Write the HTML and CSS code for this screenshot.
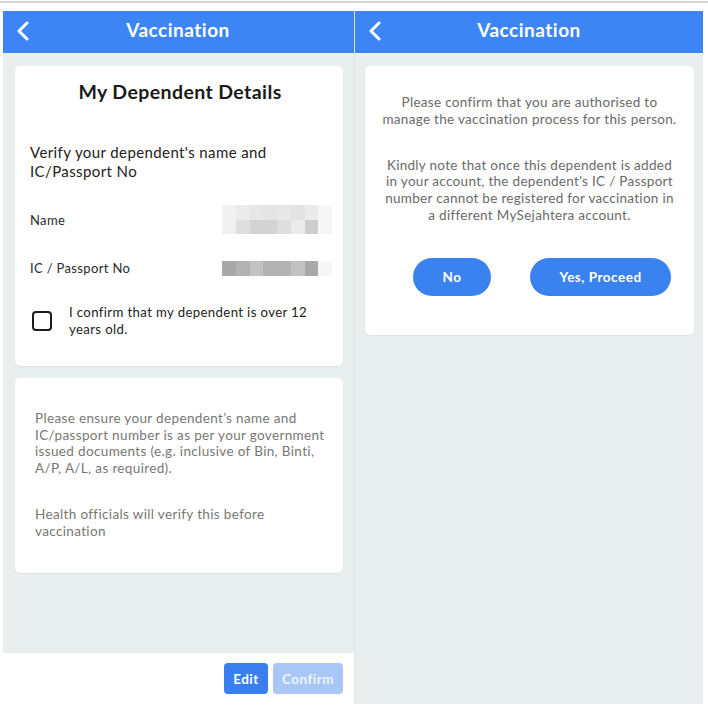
FILE: index.html
```html
<!DOCTYPE html>
<html lang="en">
<head>
<meta charset="utf-8">
<title>Vaccination</title>
<link rel="stylesheet" href="styles.css">
</head>
<body>
<div class="topline"></div>
<div class="screens">
  <section class="phone phone-left">
    <header class="appbar">
      <svg class="back" viewBox="0 0 14 20" width="14" height="20"><path d="M11 2 L3 10 L11 18" fill="none" stroke="#fff" stroke-width="3" stroke-linecap="round" stroke-linejoin="round"/></svg>
      <h1 class="appbar-title">Vaccination</h1>
    </header>
    <main class="content">
      <div class="card details">
        <h2 class="card-title">My Dependent Details</h2>
        <p class="verify">Verify your dependent's name and IC/Passport No</p>
        <div class="field">
          <span class="field-label">Name</span>
          <div class="redact redact-name">
            <i class="c1"></i><i class="c2"></i><i class="c3"></i><i class="c4"></i><i class="c3"></i><i class="c5"></i><i class="c2"></i><i class="c0"></i>
            <i class="c1"></i><i class="c6"></i><i class="c7"></i><i class="c7"></i><i class="c6"></i><i class="c2"></i><i class="c8"></i><i class="c0"></i>
          </div>
        </div>
        <div class="field field-ic">
          <span class="field-label">IC / Passport No</span>
          <div class="redact redact-ic">
            <i class="d1"></i><i class="d2"></i><i class="d3"></i><i class="d2"></i><i class="d2"></i><i class="d3"></i><i class="d1"></i><i class="c0"></i>
          </div>
        </div>
        <label class="confirm-row">
          <span class="checkbox"></span>
          <span class="confirm-text">I confirm that my dependent is over 12 years old.</span>
        </label>
      </div>
      <div class="card notes">
        <p>Please ensure your dependent’s name and IC/passport number is as per your government issued documents (e.g. inclusive of Bin, Binti, A/P, A/L, as required).</p>
        <p>Health officials will verify this before vaccination</p>
      </div>
    </main>
    <footer class="footer">
      <button class="btn btn-edit">Edit</button>
      <button class="btn btn-confirm">Confirm</button>
    </footer>
  </section>
  <section class="phone phone-right">
    <header class="appbar">
      <svg class="back" viewBox="0 0 14 20" width="14" height="20"><path d="M11 2 L3 10 L11 18" fill="none" stroke="#fff" stroke-width="3" stroke-linecap="round" stroke-linejoin="round"/></svg>
      <h1 class="appbar-title">Vaccination</h1>
    </header>
    <main class="content">
      <div class="card dialog">
        <p>Please confirm that you are authorised to<br>manage the vaccination process for this person.</p>
        <p>Kindly note that once this dependent is added<br>in your account, the dependent's IC / Passport<br>number cannot be registered for vaccination in<br>a different MySejahtera account.</p>
        <div class="actions">
          <button class="pill pill-no">No</button>
          <button class="pill pill-yes">Yes, Proceed</button>
        </div>
      </div>
    </main>
  </section>
</div>
</body>
</html>
```

FILE: styles.css
```css
* { box-sizing: border-box; }
html, body { margin: 0; padding: 0; }
body {
  background: #ffffff;
  width: 708px;
  height: 706px;
  overflow: hidden;
  font-family: "Lato", "Noto Sans", sans-serif;
  color: #1f1f1f;
}
.topline {
  height: 2px;
  margin-top: 1px;
  background: #d6d6d6;
}
.screens {
  display: flex;
  margin: 8px 0 0 3px;
  height: 693px;
}
.phone {
  display: flex;
  flex-direction: column;
  background: #e9eeee;
}
.phone-left { width: 352px; border-right: 1px solid #dfe5e5; }
.phone-right { width: 348px; }
.appbar {
  position: relative;
  height: 42px;
  background: #3d85f5;
  display: flex;
  align-items: center;
  justify-content: center;
  padding-bottom: 5px;
}
.phone-left .appbar { border-right: 1px solid #3a7de6; }
.back {
  position: absolute;
  left: 13px;
  top: 10px;
}
.appbar-title {
  margin: 0;
  color: #fff;
  font-size: 19px;
  font-weight: 700;
  letter-spacing: 0.5px;
}
.content {
  flex: 1;
  padding: 13px 11px 0 12px;
}
.phone-right .content { padding: 13px 9px 0 10px; }
.card {
  background: #fff;
  border-radius: 5px;
  box-shadow: 0 1px 2px rgba(0,0,0,0.06);
}
.details {
  height: 300px;
  padding: 13px 13px 0 15px;
}
.card-title {
  margin: 0;
  text-align: center;
  font-size: 19.5px;
  font-weight: 700;
  color: #1a1a1a;
  line-height: 26px;
  letter-spacing: 0.4px;
}
.verify {
  margin: 38px 0 0;
  font-size: 15px;
  line-height: 18.5px;
  color: #222;
  letter-spacing: 0.4px;
  padding-right: 30px;
}
.field {
  display: flex;
  align-items: center;
  justify-content: space-between;
  margin-top: 25px;
  height: 29px;
}
.field-ic { margin-top: 24px; height: 20px; }
.field-label {
  font-size: 13px;
  color: #2a2a2a;
  letter-spacing: 0.35px;
}
.redact {
  display: grid;
  grid-template-columns: repeat(8, 13.75px);
  margin-right: -2px;
}
.redact-name { grid-auto-rows: 14.5px; }
.redact-ic { grid-auto-rows: 15px; }
.redact i { display: block; }
.c0 { background: #f6f6f6; }
.c1 { background: #f1f1f1; }
.c2 { background: #ebebeb; }
.c3 { background: #e7e7e7; }
.c4 { background: #e5e5e5; }
.c5 { background: #e3e3e3; }
.c6 { background: #dedede; }
.c7 { background: #d3d3d3; }
.c8 { background: #cdcdcd; }
.d1 { background: #a8a8a8; }
.d2 { background: #b3b3b3; }
.d3 { background: #c2c2c2; }
.confirm-row {
  display: flex;
  align-items: center;
  gap: 17px;
  margin-top: 26px;
  padding-left: 2px;
}
.checkbox {
  flex: none;
  width: 20px;
  height: 20px;
  border: 2px solid #1c1c1c;
  border-radius: 4px;
}
.confirm-text {
  font-size: 13.2px;
  line-height: 17px;
  color: #222;
  letter-spacing: 0.37px;
  padding-right: 10px;
}
.notes {
  margin-top: 12px;
  height: 195px;
  padding: 32px 14px 0 20px;
  color: #777;
  font-size: 13.5px;
  line-height: 16.6px;
  letter-spacing: 0.35px;
}
.notes p { margin: 0 0 30px; }
.footer {
  height: 51px;
  background: #fff;
  display: flex;
  justify-content: flex-end;
  align-items: flex-start;
  gap: 5px;
  padding: 10px 11px 0 0;
}
.btn {
  height: 31px;
  border: 0;
  border-radius: 4px;
  color: #fff;
  font-family: inherit;
  font-size: 13.5px;
  font-weight: 700;
  letter-spacing: 0.5px;
  padding: 0;
}
.btn-edit { width: 44px; background: #3a7ff0; }
.btn-confirm { width: 70px; background: #a9c7f6; color: #eef4fe; }
.dialog {
  height: 269px;
  padding: 28px 8px 0 8px;
  text-align: center;
  color: #6a6a6a;
  font-size: 13.5px;
  line-height: 16.8px;
  letter-spacing: 0.3px;
}
.dialog p { margin: 0 0 29px; }
.actions {
  display: flex;
  gap: 39px;
  padding-left: 40px;
  margin-top: 34px;
}
.pill {
  height: 38px;
  border: 0;
  border-radius: 19px;
  background: #3b82f1;
  color: #fff;
  font-family: inherit;
  font-size: 13.5px;
  font-weight: 700;
  letter-spacing: 0.5px;
  padding: 0;
}
.pill-no { width: 78px; }
.pill-yes { width: 141px; }
```
